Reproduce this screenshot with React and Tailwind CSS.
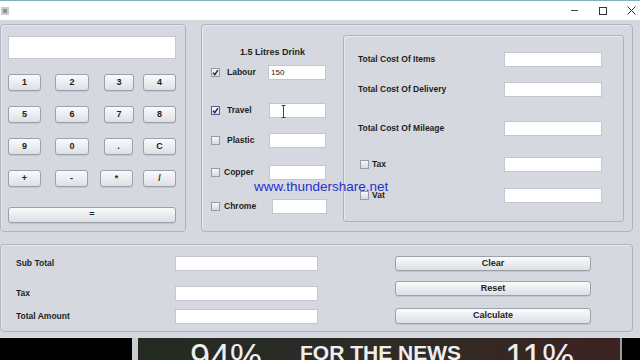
import React from "react";

const keyRows = [
    [
        { label: "1", cls: "w-[33px]" },
        { label: "2", cls: "ml-[14px] w-[34px]" },
        { label: "3", cls: "ml-[15px] w-[30px]" },
        { label: "4", cls: "ml-[9px] w-[33px]" },
    ],
    [
        { label: "5", cls: "w-[33px]" },
        { label: "6", cls: "ml-[14px] w-[34px]" },
        { label: "7", cls: "ml-[15px] w-[30px]" },
        { label: "8", cls: "ml-[9px] w-[33px]" },
    ],
    [
        { label: "9", cls: "w-[33px]" },
        { label: "0", cls: "ml-[14px] w-[34px]" },
        { label: ".", cls: "ml-[15px] w-[29px]" },
        { label: "C", cls: "ml-[10px] w-[33px]" },
    ],
    [
        { label: "+", cls: "w-[33px]" },
        { label: "-", cls: "ml-[14px] w-[33px]" },
        { label: "*", cls: "ml-[12px] w-[33px]" },
        { label: "/", cls: "ml-[10px] w-[33px]" },
    ],
];

const drinkRows = [
    { label: "Labour", checked: true, value: "150", row: "mt-[8px]", lbl: "ml-[7px] w-[41px]", input: "w-[58px]" },
    { label: "Travel", checked: true, focus: true, row: "mt-[23px]", lbl: "ml-[7px] w-[42px]", input: "w-[57px]" },
    { label: "Plastic", row: "mt-[15px]", lbl: "ml-[7px] w-[42px]", input: "w-[57px]" },
    { label: "Copper", row: "mt-[17px]", lbl: "ml-[4px] w-[45px]", input: "w-[57px]" },
    { label: "Chrome", row: "mt-[19px]", lbl: "ml-[4px] w-[48px]", input: "w-[55px]" },
];

const costRows = [
    { label: "Total Cost Of Items", row: "mt-[16px]" },
    { label: "Total Cost Of Delivery", row: "mt-[15px]" },
    { label: "Total Cost Of Mileage", row: "mt-[24px]" },
    { label: "Tax", check: true, row: "mt-[21px]" },
    { label: "Vat", check: true, row: "mt-[16px]" },
];

function CheckBox({ checked, focus }) {
    return (
        <span
            className={`flex h-[9px] w-[9px] shrink-0 items-center justify-center border bg-gradient-to-b from-[#f7f8fa] to-[#d5d9df] ${
                focus ? "border-[#4d5f92]" : "border-[#979da6]"
            }`}
        >
            {checked && (
                <svg width="7" height="7" viewBox="0 0 8 8">
                    <path d="M1.2 4.2 L3.2 6.4 L6.8 1.2" fill="none" stroke="#1c2540" strokeWidth="1.6" />
                </svg>
            )}
        </span>
    );
}

function Field({ className, children }) {
    return (
        <div className={`flex h-[15px] items-center border border-[#c3c7cd] bg-white pl-[2px] text-[8px] text-[#222] ${className}`}>
            {children}
        </div>
    );
}

function Key({ label, className }) {
    return (
        <button
            className={`flex items-center justify-center rounded-[3px] border border-[#9ba1a9] bg-gradient-to-b from-[#fbfbfc] to-[#dcdfe4] text-[9px] font-bold text-[#222] shadow-[0_1px_0_#c4c8ce] ${className}`}
        >
            {label}
        </button>
    );
}

export default function App() {
    return (
        <div className="relative h-[360px] w-[640px] overflow-hidden bg-[#d5d9df] font-['Liberation_Sans',Arial,sans-serif] text-[#1e1e1e]">
            {/* title bar */}
            <div className="flex h-[20px] items-center border-t border-[#7fb0bd] bg-white">
                <div className="ml-[1px] flex h-[8px] w-[8px] items-center justify-center bg-[#c9ccd1]">
                    <div className="h-[4px] w-[4px] bg-[#8d949c]" />
                </div>
                <div className="ml-auto flex items-center">
                    <div className="h-px w-[7px] bg-[#444]" />
                    <div className="ml-[21px] h-[8px] w-[8px] border border-[#333]" />
                    <svg className="ml-[20px] mr-[4px]" width="9" height="9" viewBox="0 0 9 9">
                        <path d="M0.5 0.5 L8.5 8.5 M8.5 0.5 L0.5 8.5" stroke="#333" strokeWidth="1" />
                    </svg>
                </div>
            </div>

            {/* top panels */}
            <div className="mt-[4px] flex">
                {/* calculator */}
                <div className="flex h-[208px] w-[186px] flex-col rounded-[4px] border border-[#aeb3bb] px-[7px] pt-[11px] shadow-[inset_1px_1px_0_#e9ecef]">
                    <div className="h-[23px] w-[168px] border border-[#c5c9cf] bg-white" />
                    {keyRows.map((row, i) => (
                        <div key={i} className="mt-[15px] flex h-[17px]">
                            {row.map((k) => (
                                <Key key={k.label} label={k.label} className={k.cls} />
                            ))}
                        </div>
                    ))}
                    <Key label="=" className="mt-[20px] h-[16px] w-[168px]" />
                </div>

                {/* drink / costs */}
                <div className="ml-[15px] flex h-[208px] w-[432px] rounded-[4px] border border-[#aeb3bb] shadow-[inset_1px_1px_0_#e9ecef]">
                    <div className="flex w-[141px] flex-col pt-[22px]">
                        <div className="h-[10px] text-center text-[9px] font-bold leading-[10px]">1.5 Litres Drink</div>
                        {drinkRows.map((r) => (
                            <div key={r.label} className={`flex h-[15px] items-center pl-[9px] ${r.row}`}>
                                <CheckBox checked={r.checked} focus={r.focus} />
                                <span className={`text-[8.5px] font-bold ${r.lbl}`}>{r.label}</span>
                                <Field className={r.input}>{r.value}</Field>
                            </div>
                        ))}
                    </div>
                    <div className="mt-[10px] flex h-[187px] w-[281px] flex-col rounded-[3px] border border-[#aeb3bb] pl-[14px] pr-[21px] shadow-[inset_1px_1px_0_#e9ecef]">
                        {costRows.map((r) => (
                            <div key={r.label} className={`flex h-[15px] items-center ${r.row}`}>
                                {r.check && (
                                    <span className="ml-[2px] mr-[3px]">
                                        <CheckBox />
                                    </span>
                                )}
                                <span className="flex-1 text-[8.5px] font-bold">{r.label}</span>
                                <Field className="w-[98px]" />
                            </div>
                        ))}
                    </div>
                </div>
            </div>

            {/* totals */}
            <div className="mt-[12px] flex h-[88px] w-[633px] rounded-[4px] border border-[#aeb3bb] pl-[15px] shadow-[inset_1px_1px_0_#e9ecef]">
                <div className="flex flex-col pt-[11px]">
                    {[
                        { label: "Sub Total", row: "" },
                        { label: "Tax", row: "mt-[15px]" },
                        { label: "Total Amount", row: "mt-[8px]" },
                    ].map((r) => (
                        <div key={r.label} className={`flex h-[15px] items-center ${r.row}`}>
                            <span className="w-[159px] text-[8.5px] font-bold">{r.label}</span>
                            <Field className="w-[143px]" />
                        </div>
                    ))}
                </div>
                <div className="ml-[77px] flex flex-col pt-[11px]">
                    <Key label="Clear" className="h-[15px] w-[196px]" />
                    <Key label="Reset" className="mt-[10px] h-[15px] w-[196px]" />
                    <Key label="Calculate" className="mt-[12px] h-[16px] w-[196px]" />
                </div>
            </div>

            {/* video strip below the window */}
            <div className="mt-[6px] flex h-[22px] bg-black">
                <div className="ml-[132px] w-[6px] bg-[#c9cbcd]" />
                <div className="flex w-[482px] items-start overflow-hidden bg-gradient-to-r from-[#232a22] via-[#2d2b27] to-[#3b2320] text-[#eeeeee]">
                    <span className="ml-[52px] mt-[2px] w-[78px] shrink-0 whitespace-nowrap text-[36px] leading-[36px]">94%</span>
                    <span className="ml-[32px] mt-[4px] w-[168px] shrink-0 whitespace-nowrap text-[21px] font-semibold leading-[21px]">FOR THE NEWS</span>
                    <span className="ml-[37px] mt-[2px] shrink-0 whitespace-nowrap text-[36px] leading-[36px]">11%</span>
                </div>
                <div className="w-[2px] bg-[#9a9c9e]" />
            </div>

            {/* watermark */}
            <div className="absolute left-[254px] top-[179px] text-[13.5px] leading-[15px] text-[#2430c8]">www.thundershare.net</div>

            {/* mouse cursor */}
            <svg className="absolute left-[281px] top-[105px]" width="5" height="13" viewBox="0 0 5 13">
                <path d="M0.5 0.5 H4.5 M2.5 0.5 V12.5 M0.5 12.5 H4.5" stroke="#444" strokeWidth="1" fill="none" />
            </svg>
        </div>
    );
}
